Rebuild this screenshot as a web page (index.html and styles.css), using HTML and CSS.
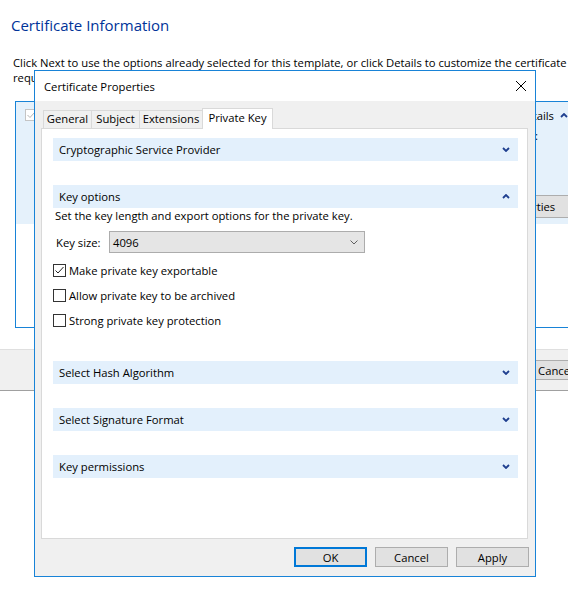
FILE: index.html
```html
<html>
<head>
<title>Certificate Enrollment</title>
<link rel="stylesheet" href="styles.css">
</head>
<body>
<div class="wizard">
  <h1 class="wizard-title">Certificate Information</h1>
  <p class="wizard-text">Click Next to use the options already selected for this template, or click Details to customize the certificate<br>request.</p>

  <div class="enroll-list">
    <div class="enroll-item">
      <div class="enroll-head">
        <span class="enroll-check">
          <svg width="12" height="12" viewBox="0 0 12 12"><rect x="0.5" y="0.5" width="11" height="11" fill="#fff" stroke="#c4c4c4"/><path d="M2.5 6l2.5 2.5 4.5-5" stroke="#b5b5b5" fill="none"/></svg>
        </span>
        <span class="enroll-details">Details
          <svg width="8" height="5" viewBox="0 0 8 5"><path d="M1 4l3-3 3 3" stroke="#1f3f8f" stroke-width="1.8" fill="none"/></svg>
        </span>
      </div>
      <div class="enroll-state">Status:</div>
      <button type="button" class="win-button enroll-props">Properties</button>
    </div>
  </div>

  <div class="wizard-footer">
    <button type="button" class="win-button">Enroll</button>
    <button type="button" class="win-button">Cancel</button>
  </div>
</div>

<div class="dialog">
  <div class="dialog-title">
    <span>Certificate Properties</span>
    <svg class="dialog-close" width="10" height="10" viewBox="0 0 10 10"><path d="M0 0L10 10M10 0L0 10" stroke="#000" stroke-width="1"/></svg>
  </div>

  <div class="dialog-body">
    <div class="tabs">
      <div class="tab tab-general">General</div>
      <div class="tab tab-subject">Subject</div>
      <div class="tab tab-ext">Extensions</div>
      <div class="tab tab-key active">Private Key</div>
    </div>

    <div class="tab-page">
      <div class="section">
        <span>Cryptographic Service Provider</span>
        <svg width="8" height="5" viewBox="0 0 8 5"><path d="M1 1l3 3 3-3" stroke="#1f3f8f" stroke-width="1.8" fill="none"/></svg>
      </div>

      <div class="section section-open">
        <span>Key options</span>
        <svg width="8" height="5" viewBox="0 0 8 5"><path d="M1 4l3-3 3 3" stroke="#1f3f8f" stroke-width="1.8" fill="none"/></svg>
      </div>
      <div class="key-options">
        <div class="key-desc">Set the key length and export options for the private key.</div>
        <div class="key-size">
          <span class="key-size-label">Key size:</span>
          <div class="combo">
            <span>4096</span>
            <svg width="8" height="5" viewBox="0 0 8 5"><path d="M0.5 0.5l3.5 3.5 3.5-3.5" stroke="#606060" fill="none"/></svg>
          </div>
        </div>
        <label class="check-row">
          <span class="check-box checked">
            <svg width="11" height="11" viewBox="0 0 11 11"><path d="M1.5 5.5l2.5 2.5 5.5-6" stroke="#222" fill="none"/></svg>
          </span>
          Make private key exportable
        </label>
        <label class="check-row">
          <span class="check-box"></span>
          Allow private key to be archived
        </label>
        <label class="check-row">
          <span class="check-box"></span>
          Strong private key protection
        </label>
      </div>

      <div class="section section-hash">
        <span>Select Hash Algorithm</span>
        <svg width="8" height="5" viewBox="0 0 8 5"><path d="M1 1l3 3 3-3" stroke="#1f3f8f" stroke-width="1.8" fill="none"/></svg>
      </div>
      <div class="section">
        <span>Select Signature Format</span>
        <svg width="8" height="5" viewBox="0 0 8 5"><path d="M1 1l3 3 3-3" stroke="#1f3f8f" stroke-width="1.8" fill="none"/></svg>
      </div>
      <div class="section">
        <span>Key permissions</span>
        <svg width="8" height="5" viewBox="0 0 8 5"><path d="M1 1l3 3 3-3" stroke="#1f3f8f" stroke-width="1.8" fill="none"/></svg>
      </div>
    </div>

    <div class="dialog-buttons">
      <button type="button" class="win-button default">OK</button>
      <button type="button" class="win-button">Cancel</button>
      <button type="button" class="win-button">Apply</button>
    </div>
  </div>
</div>
</body>
</html>
```

FILE: styles.css
```css
body {
  margin: 0;
  width: 568px;
  height: 591px;
  overflow: hidden;
  background: #fff;
  color: #000;
  font-family: "Open Sans", "Noto Sans", sans-serif;
  font-size: 11.25px;
}

.wizard {
  padding-top: 14px;
}

.wizard-title {
  margin: 0 0 0 11px;
  font-size: 15px;
  font-weight: normal;
  line-height: 22px;
  color: #003399;
}

.wizard-text {
  margin: 19px 0 0 13px;
  line-height: 15px;
  white-space: nowrap;
}

.enroll-list {
  box-sizing: border-box;
  margin: 16px 0 0 15px;
  width: 565px;
  height: 227px;
  border: 1px solid #1883d7;
}

.enroll-item {
  box-sizing: border-box;
  height: 122px;
  padding: 6px 11px 6px 9px;
  background: #e5f1fb;
  display: flex;
  flex-direction: column;
}

.enroll-head {
  height: 14px;
  display: flex;
  justify-content: space-between;
  align-items: center;
}

.enroll-check,
.enroll-details {
  display: flex;
  align-items: center;
  gap: 6px;
}

.enroll-state {
  margin-top: 6px;
  margin-right: 30px;
  line-height: 15px;
  text-align: right;
}

.win-button {
  box-sizing: border-box;
  width: 73px;
  height: 20px;
  padding: 0;
  border: 1px solid #adadad;
  background: #e1e1e1;
  color: #000;
  font-family: inherit;
  font-size: 11.25px;
}

.win-button.default {
  border: 2px solid #0078d7;
}

.enroll-props {
  margin-top: auto;
  margin-right: -5px;
  align-self: flex-end;
  width: 90px;
  height: 23px;
}

.wizard-footer {
  box-sizing: border-box;
  margin-top: 21px;
  width: 620px;
  height: 42px;
  padding: 10px 28px 0 0;
  background: #f0f0f0;
  border-top: 1px solid #dfdfdf;
  border-bottom: 1px solid #a0a0a0;
  display: flex;
  justify-content: flex-end;
  align-items: flex-start;
  gap: 8px;
}

/* dialog on top of the wizard */
.dialog {
  position: absolute;
  left: 34px;
  top: 70px;
  box-sizing: border-box;
  width: 502px;
  height: 507px;
  border: 1px solid #1883d7;
  background: #f0f0f0;
  display: flex;
  flex-direction: column;
}

.dialog-title {
  height: 30px;
  padding: 0 9px 0 9px;
  background: #fff;
  display: flex;
  justify-content: space-between;
  align-items: center;
}

.dialog-body {
  flex: 1;
  padding: 7px 7px 9px 6px;
  display: flex;
  flex-direction: column;
}

.tabs {
  height: 20px;
  padding-left: 2px;
  display: flex;
  align-items: flex-end;
  position: relative;
  z-index: 1;
}

.tab {
  box-sizing: border-box;
  height: 18px;
  margin-left: -1px;
  border: 1px solid #d9d9d9;
  border-bottom: none;
  background: #f0f0f0;
  text-align: center;
  line-height: 16px;
}

.tab-general { width: 49px; margin-left: 0; }
.tab-subject { width: 49px; }
.tab-ext { width: 64px; }
.tab-key { width: 71px; }

.tab.active {
  height: 21px;
  margin-bottom: -1px;
  background: #fff;
  line-height: 18px;
}

.tab-page {
  flex: 1;
  box-sizing: border-box;
  padding: 9px 9px 0 11px;
  background: #fff;
  border: 1px solid #d9d9d9;
}

.section {
  height: 23px;
  padding: 0 8px 0 6px;
  background: #e3f0fc;
  display: flex;
  justify-content: space-between;
  align-items: center;
}

.section-open {
  margin-top: 24px;
}

.section + .section {
  margin-top: 24px;
}

.section-hash {
  margin-top: 28px;
}

.key-desc {
  padding-left: 2px;
  line-height: 16px;
}

.key-size {
  margin-top: 7px;
  display: flex;
  align-items: center;
}

.key-size-label {
  width: 56px;
  padding-left: 3px;
  box-sizing: border-box;
}

.combo {
  box-sizing: border-box;
  width: 256px;
  height: 22px;
  padding: 0 6px 0 3px;
  border: 1px solid #acacac;
  background: #e5e5e5;
  display: flex;
  justify-content: space-between;
  align-items: center;
}

.key-size + .check-row {
  margin-top: 5px;
}

.check-row {
  height: 25px;
  display: flex;
  align-items: center;
  gap: 3px;
}

.check-box {
  box-sizing: border-box;
  width: 13px;
  height: 13px;
  border: 1px solid #333;
  background: #fff;
  display: flex;
}

.dialog-buttons {
  margin-top: 8px;
  margin-right: -1px;
  display: flex;
  justify-content: flex-end;
  gap: 8px;
}
```
